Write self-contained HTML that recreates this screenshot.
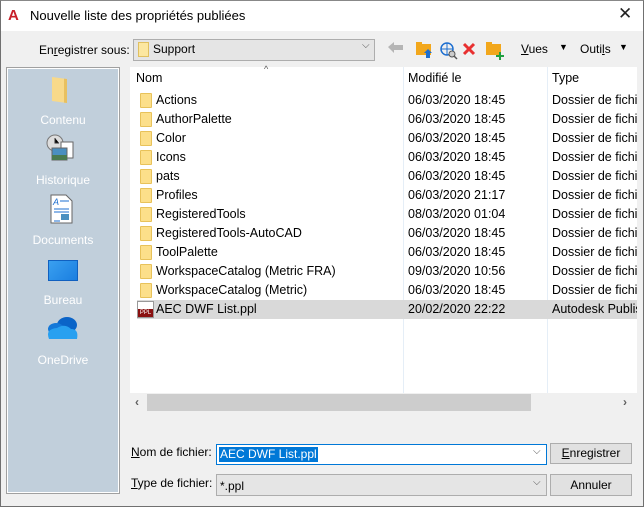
<!DOCTYPE html>
<html><head><meta charset="utf-8"><style>
*{box-sizing:border-box;margin:0;padding:0}
body{width:644px;height:507px;overflow:hidden;background:#f0f0f0;font-family:"Liberation Sans",sans-serif;font-size:12px;color:#000;position:relative}
.abs{position:absolute}
.win{position:absolute;left:0;top:0;width:644px;height:507px;border:1px solid #707070;border-top-color:#888}
.title{position:absolute;left:1px;top:1px;width:642px;height:30px;background:#fff}
.side{left:6px;top:67px;width:114px;height:427px;background:#c1cfdb;border:1px solid #a0a0a0;box-shadow:inset 0 0 0 1px #fff}
.side .lbl{position:absolute;width:112px;text-align:center;color:#fff;font-size:12px}
.list{left:130px;top:67px;width:507px;height:346px;background:#fff}
.row{position:absolute;left:7px;height:19px;width:500px;line-height:19px;font-size:12.5px}
.row .n{position:absolute;left:19px}
.row .d{position:absolute;left:271px}
.row .t{position:absolute;left:415px;white-space:nowrap;width:85px;overflow:hidden}
.fold{position:absolute;left:3px;top:2px;width:12px;height:15px;background:#fcdf8a;border:1px solid #e8c25a;border-radius:1px}
.u{text-decoration:underline}
.btn{background:#e1e1e1;border:1px solid #adadad;text-align:center;line-height:19px;font-size:12px}
</style></head><body>
<div class="win"></div>
<div class="title"></div>
<div class="abs" style="left:8px;top:7px;font-weight:bold;color:#c8202a;font-size:15px;font-family:'Liberation Sans'">A</div>
<div class="abs" style="left:30px;top:8px;font-size:13px">Nouvelle liste des propriétés publiées</div>
<div class="abs" style="left:618px;top:4px;font-size:17px;color:#222">✕</div>

<div class="abs" style="left:39px;top:43px">En<span class="u">r</span>egistrer sous:</div>
<div class="abs" style="left:133px;top:39px;width:242px;height:22px;background:#e5e5e5;border:1px solid #adadad"></div>
<div class="abs" style="left:138px;top:42px;width:11px;height:15px;background:#fce7a0;border:1px solid #e0c060"></div>
<div class="abs" style="left:153px;top:42px">Support</div>
<div class="abs" style="left:362px;top:40px;font-size:10px;color:#555">⌵</div>
<svg class="abs" style="left:385px;top:39px" width="130" height="22">
<path d="M3 8 L9 3 V6 H18 V11 H9 V14 Z" fill="#b5b5b5"/>
<rect x="31" y="5" width="15" height="11" fill="#f2a71c"/><rect x="31" y="3" width="6" height="3" fill="#f2a71c"/><path d="M41 19 V14 H39 L43 10 L47 14 H45 V19 Z" fill="#1e6fd0"/>
<circle cx="62" cy="10" r="6" fill="none" stroke="#1e6fd0" stroke-width="1.5"/><path d="M56 10 H68 M62 4 V16" stroke="#1e6fd0"/><circle cx="67" cy="15" r="3" fill="#ccc" stroke="#555"/><path d="M69 17 L72 20" stroke="#555" stroke-width="1.5"/>
<path d="M79 5 L89 15 M89 5 L79 15" stroke="#e83030" stroke-width="3"/>
<rect x="101" y="5" width="15" height="11" fill="#f2a71c"/><rect x="101" y="3" width="6" height="3" fill="#f2a71c"/><path d="M111 17 H119 M115 13 V21" stroke="#20a040" stroke-width="2"/>
</svg>
<div class="abs" style="left:521px;top:42px"><span class="u">V</span>ues</div>
<div class="abs" style="left:559px;top:42px;font-size:9px">▼</div>
<div class="abs" style="left:580px;top:42px">Outi<span class="u">l</span>s</div>
<div class="abs" style="left:619px;top:42px;font-size:9px">▼</div>

<div class="abs side">
<div class="abs" style="left:45px;top:10px;width:15px;height:24px;background:#f8d98a;border-right:3px solid #e8c060;transform:skewY(8deg)"></div>
<div class="lbl" style="top:45px">Contenu</div>
<svg class="abs" style="left:38px;top:66px" width="32" height="32"><circle cx="10" cy="9" r="8" fill="#ddd" stroke="#777"/><path d="M10 4 V9 H14" stroke="#333"/><rect x="16" y="8" width="12" height="16" fill="#fff" stroke="#666"/><rect x="7" y="14" width="15" height="12" fill="#4a8fc0" stroke="#666"/><rect x="7" y="21" width="15" height="5" fill="#4a7a50"/></svg>
<div class="lbl" style="top:105px">Historique</div>
<svg class="abs" style="left:43px;top:126px" width="24" height="30"><path d="M1 1 H16 L22 7 V29 H1 Z" fill="#fff" stroke="#666"/><text x="3" y="11" font-size="9" fill="#1e6fd0" font-style="italic">A</text><path d="M10 7 H19 M4 15 H19 M4 18 H19 M4 27 H10" stroke="#1e6fd0"/><rect x="11" y="20" width="8" height="6" fill="#4a8fc0"/></svg>
<div class="lbl" style="top:165px">Documents</div>
<div class="abs" style="left:41px;top:192px;width:30px;height:21px;background:linear-gradient(135deg,#3aa0f0,#1a7ee0);border:1px solid #1060c0"></div>
<div class="lbl" style="top:225px">Bureau</div>
<svg class="abs" style="left:38px;top:247px" width="36" height="26"><ellipse cx="22" cy="10" rx="10" ry="8" fill="#0a64c8"/><ellipse cx="11" cy="14" rx="8" ry="6" fill="#1478d8"/><path d="M4 24 Q0 14 12 13 Q20 8 26 14 Q34 14 32 24 Z" fill="#28a0f0"/></svg>
<div class="lbl" style="top:285px">OneDrive</div>
</div>

<div class="abs list">
<div class="abs" style="left:134px;top:-3px;font-size:9px;color:#555">^</div>
<div class="abs" style="left:6px;top:4px;font-size:12.5px">Nom</div>
<div class="abs" style="left:273px;top:0;width:1px;height:326px;background:#e5eef7"></div>
<div class="abs" style="left:417px;top:0;width:1px;height:326px;background:#e5eef7"></div>
<div class="abs" style="left:278px;top:4px;font-size:12.5px">Modifié le</div>
<div class="abs" style="left:422px;top:4px;font-size:12.5px">Type</div>

<div class="row" style="top:24px"><div class="fold"></div><span class="n">Actions</span><span class="d">06/03/2020 18:45</span><span class="t">Dossier de fichiers</span></div>
<div class="row" style="top:43px"><div class="fold"></div><span class="n">AuthorPalette</span><span class="d">06/03/2020 18:45</span><span class="t">Dossier de fichiers</span></div>
<div class="row" style="top:62px"><div class="fold"></div><span class="n">Color</span><span class="d">06/03/2020 18:45</span><span class="t">Dossier de fichiers</span></div>
<div class="row" style="top:81px"><div class="fold"></div><span class="n">Icons</span><span class="d">06/03/2020 18:45</span><span class="t">Dossier de fichiers</span></div>
<div class="row" style="top:100px"><div class="fold"></div><span class="n">pats</span><span class="d">06/03/2020 18:45</span><span class="t">Dossier de fichiers</span></div>
<div class="row" style="top:119px"><div class="fold"></div><span class="n">Profiles</span><span class="d">06/03/2020 21:17</span><span class="t">Dossier de fichiers</span></div>
<div class="row" style="top:138px"><div class="fold"></div><span class="n">RegisteredTools</span><span class="d">08/03/2020 01:04</span><span class="t">Dossier de fichiers</span></div>
<div class="row" style="top:157px"><div class="fold"></div><span class="n">RegisteredTools-AutoCAD</span><span class="d">06/03/2020 18:45</span><span class="t">Dossier de fichiers</span></div>
<div class="row" style="top:176px"><div class="fold"></div><span class="n">ToolPalette</span><span class="d">06/03/2020 18:45</span><span class="t">Dossier de fichiers</span></div>
<div class="row" style="top:195px"><div class="fold"></div><span class="n">WorkspaceCatalog (Metric FRA)</span><span class="d">09/03/2020 10:56</span><span class="t">Dossier de fichiers</span></div>
<div class="row" style="top:214px"><div class="fold"></div><span class="n">WorkspaceCatalog (Metric)</span><span class="d">06/03/2020 18:45</span><span class="t">Dossier de fichiers</span></div>
<div class="row" style="top:233px;background:#d9d9d9"><div class="abs" style="left:0;top:1px;width:17px;height:17px;background:#fff;border:1px solid #999"><div class="abs" style="left:0;bottom:0;width:15px;height:8px;background:#8a1010;color:#fff;font-size:6px;line-height:8px;text-align:center">PPL</div></div><span class="n">AEC DWF List.ppl</span><span class="d">20/02/2020 22:22</span><span class="t">Autodesk Publish</span></div>

<div class="abs" style="left:0;top:326px;width:507px;height:20px;background:#f0f0f0"></div>
<div class="abs" style="left:17px;top:327px;width:384px;height:17px;background:#cdcdcd"></div>
<div class="abs" style="left:5px;top:328px;font-size:12px;color:#606060;font-weight:bold">‹</div>
<div class="abs" style="left:493px;top:328px;font-size:12px;color:#606060;font-weight:bold">›</div>
</div>

<div class="abs" style="left:131px;top:445px"><span class="u">N</span>om de fichier:</div>
<div class="abs" style="left:216px;top:444px;width:331px;height:21px;background:#fff;border:1px solid #0078d7"></div>
<div class="abs" style="left:219px;top:447px;height:15px;padding:0 1px;background:#0078d7;color:#fff;line-height:15px">AEC DWF List.ppl</div>
<div class="abs" style="left:533px;top:446px;font-size:10px;color:#555">⌵</div>
<div class="abs btn" style="left:550px;top:443px;width:82px;height:21px"><span class="u">E</span>nregistrer</div>

<div class="abs" style="left:131px;top:476px"><span class="u">T</span>ype de fichier:</div>
<div class="abs" style="left:216px;top:474px;width:331px;height:22px;background:#e5e5e5;border:1px solid #adadad"></div>
<div class="abs" style="left:220px;top:479px">*.ppl</div>
<div class="abs" style="left:533px;top:477px;font-size:10px;color:#555">⌵</div>
<div class="abs btn" style="left:550px;top:474px;width:82px;height:22px;line-height:20px">Annuler</div>
</body></html>
